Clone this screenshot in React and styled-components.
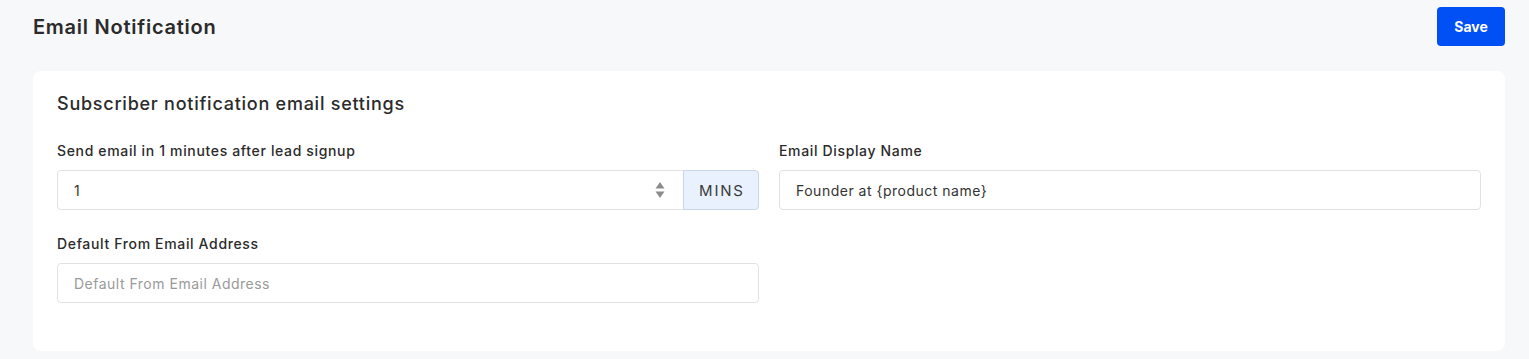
import React from "react";
import styled, { createGlobalStyle } from "styled-components";

const Global = createGlobalStyle`
  html, body { margin: 0; padding: 0; background: #f7f8fa; }
  body { font-family: Inter, "Noto Sans", sans-serif; color: #333; }
  * { box-sizing: border-box; }
`;

const Page = styled.div`
  padding: 7px 24px 8px 33px;
`;

const Header = styled.div`
  display: flex;
  align-items: center;
  justify-content: space-between;
  height: 39px;
  margin-bottom: 25px;
`;

const Title = styled.h1`
  margin: 0;
  font-size: 20px;
  font-weight: 600;
  letter-spacing: 0.75px;
  color: #2b2b2b;
`;

const SaveButton = styled.button`
  width: 68px;
  height: 39px;
  border: none;
  border-radius: 4px;
  background: #0050f5;
  color: #fff;
  font-family: inherit;
  font-size: 14px;
  font-weight: 700;
  cursor: pointer;
`;

const Card = styled.div`
  background: #fff;
  border-radius: 8px;
  padding: 22px 24px 48px;
`;

const CardTitle = styled.h2`
  margin: 0 0 27px;
  font-size: 18px;
  font-weight: 500;
  line-height: 22px;
  letter-spacing: 0.75px;
  color: #2b2b2b;
`;

const Grid = styled.div`
  display: grid;
  grid-template-columns: 1fr 1fr;
  column-gap: 20px;
  row-gap: 25px;
`;

const Field = styled.div`
  display: flex;
  flex-direction: column;
`;

const Label = styled.label`
  font-size: 14px;
  font-weight: 500;
  line-height: 17px;
  letter-spacing: 0.65px;
  color: #2b2b2b;
  margin-bottom: 11px;
`;

const Group = styled.div`
  display: flex;
  height: 40px;
`;

const InputBox = styled.div`
  flex: 1;
  display: flex;
  align-items: center;
  border: 1px solid #e2e2e2;
  border-radius: ${(p) => (p.$joined ? "4px 0 0 4px" : "4px")};
  padding: 0 16px;
  background: #fff;
`;

const Input = styled.input`
  flex: 1;
  min-width: 0;
  border: none;
  outline: none;
  background: transparent;
  font-family: inherit;
  font-size: 14px;
  letter-spacing: 0.5px;
  color: #333;
  padding: 0;
  &::placeholder { color: #9a9a9a; }
`;

const Addon = styled.div`
  width: 76px;
  display: flex;
  align-items: center;
  justify-content: center;
  background: #e8f1fd;
  border: 1px solid #c9d6e6;
  border-radius: 0 4px 4px 0;
  margin-left: -1px;
  font-size: 15px;
  color: #3a3a3a;
  letter-spacing: 1.8px;
  text-indent: 1.8px;
`;

const Spinner = () => (
  <svg width="10" height="18" viewBox="0 0 10 18" style={{ marginRight: 2 }}>
    <path d="M5 1 L9.5 7.5 H0.5 Z" fill="#8c8c8c" />
    <path d="M5 17 L9.5 10.5 H0.5 Z" fill="#8c8c8c" />
  </svg>
);

export default function App() {
  return (
    <>
      <Global />
      <Page>
        <Header>
          <Title>Email Notification</Title>
          <SaveButton>Save</SaveButton>
        </Header>
        <Card>
          <CardTitle>Subscriber notification email settings</CardTitle>
          <Grid>
            <Field>
              <Label>Send email in 1 minutes after lead signup</Label>
              <Group>
                <InputBox $joined>
                  <Input defaultValue="1" />
                  <Spinner />
                </InputBox>
                <Addon>MINS</Addon>
              </Group>
            </Field>
            <Field>
              <Label>Email Display Name</Label>
              <Group>
                <InputBox>
                  <Input defaultValue="Founder at {product name}" />
                </InputBox>
              </Group>
            </Field>
            <Field>
              <Label>Default From Email Address</Label>
              <Group>
                <InputBox>
                  <Input placeholder="Default From Email Address" />
                </InputBox>
              </Group>
            </Field>
          </Grid>
        </Card>
      </Page>
    </>
  );
}
